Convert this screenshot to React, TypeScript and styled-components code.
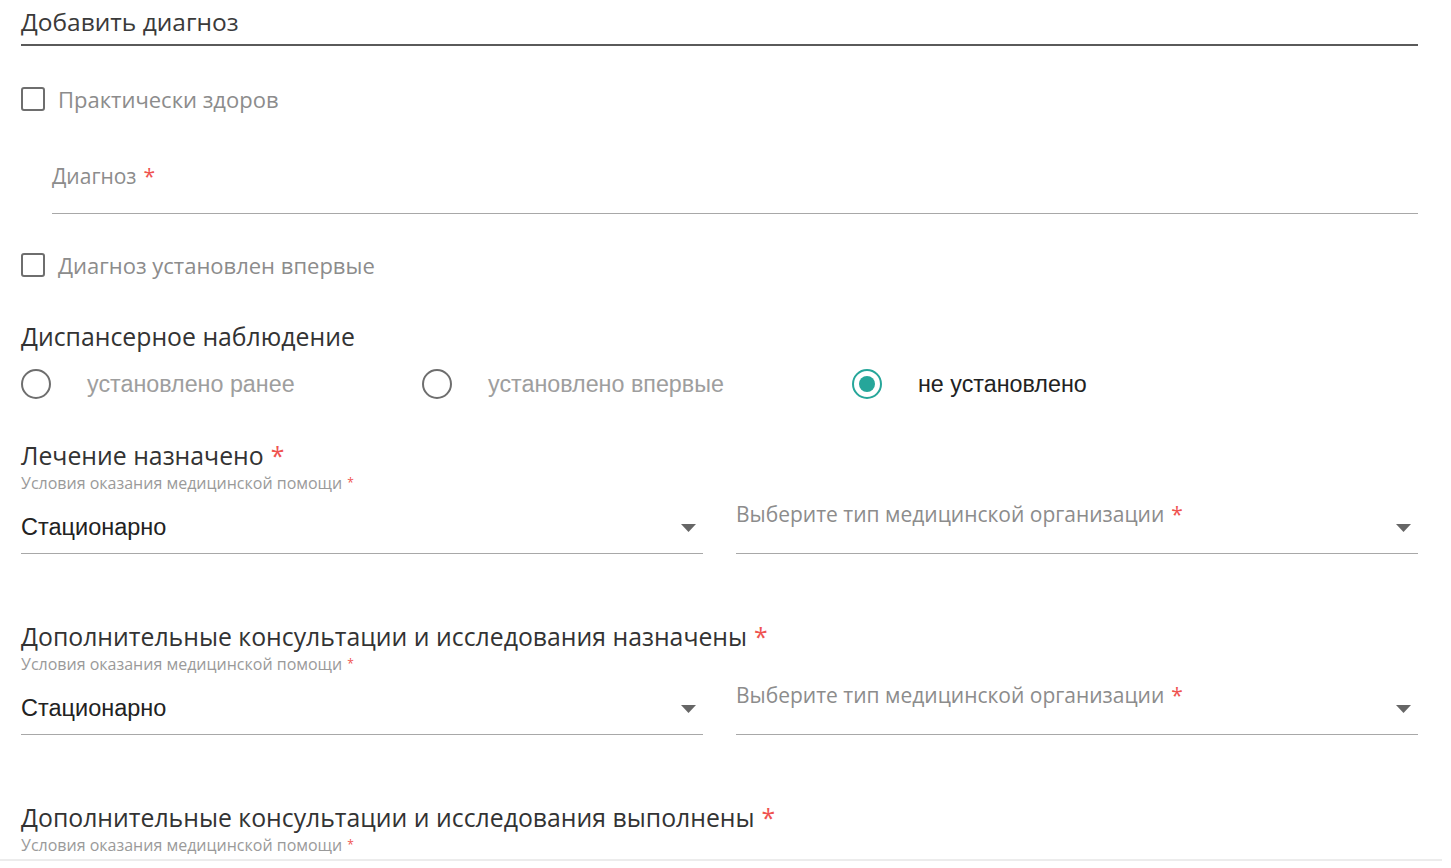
import React from "react";
import styled, { createGlobalStyle } from "styled-components";

const GlobalStyle = createGlobalStyle`
  html, body {
    margin: 0;
    padding: 0;
    background: #ffffff;
  }
  body {
    font-family: "Open Sans", "Noto Sans", sans-serif;
    color: #333;
  }
`;

const Page = styled.div`
  width: 1451px;
  height: 868px;
  overflow: hidden;
  box-sizing: border-box;
`;

const Form = styled.div`
  width: 1397px;
  margin-left: 21px;
  display: flex;
  flex-direction: column;
`;

const Title = styled.div`
  font-size: 24.5px;
  line-height: 44px;
  height: 44px;
  color: #3a3a3a;
  border-bottom: 2px solid #5a5a5a;
`;

const CheckRow = styled.label<{ $top: number }>`
  display: flex;
  align-items: center;
  height: 40px;
  margin-top: ${(p) => p.$top}px;
  gap: 13px;
  font-size: 22px;
  color: #8c8c8c;
`;

const Box = styled.span`
  width: 20px;
  height: 20px;
  border: 2px solid #6e6e6e;
  border-radius: 3px;
  flex-shrink: 0;
`;

const Star = styled.span<{ $small?: boolean }>`
  color: #ef5350;
  margin-left: ${(p) => (p.$small ? "5px" : "7px")};
  font-size: ${(p) => (p.$small ? "12px" : "inherit")};
  vertical-align: ${(p) => (p.$small ? "top" : "baseline")};
`;

const TextField = styled.div`
  margin-top: 40px;
  margin-left: 31px;
  height: 54px;
  border-bottom: 1px solid #a8a8a8;
`;

const FieldLabel = styled.div`
  font-size: 21px;
  line-height: 34px;
  color: #8c8c8c;
`;

const Heading = styled.div<{ $top: number }>`
  margin-top: ${(p) => p.$top}px;
  font-size: 24.8px;
  line-height: 34px;
  color: #333;
  white-space: nowrap;
`;

const SubLabel = styled.div`
  font-size: 16px;
  line-height: 22px;
  color: #9a9a9a;
  white-space: nowrap;
`;

const RadioRow = styled.div`
  display: flex;
  align-items: center;
  height: 40px;
  margin-top: 11px;
`;

const RadioItem = styled.label<{ $width: number }>`
  display: flex;
  align-items: center;
  gap: 36px;
  width: ${(p) => p.$width}px;
  font-family: "Liberation Sans", Arial, sans-serif;
  font-size: 23.3px;
`;

const Circle = styled.span<{ $on?: boolean }>`
  width: 26px;
  height: 26px;
  border-radius: 50%;
  border: 2.5px solid ${(p) => (p.$on ? "#26a69a" : "#6e6e6e")};
  display: flex;
  align-items: center;
  justify-content: center;
  flex-shrink: 0;
`;

const Dot = styled.span`
  width: 16px;
  height: 16px;
  border-radius: 50%;
  background: #26a69a;
`;

const RadioText = styled.span<{ $on?: boolean }>`
  color: ${(p) => (p.$on ? "#222" : "#9e9e9e")};
  white-space: nowrap;
`;

const SelectGrid = styled.div`
  display: grid;
  grid-template-columns: 1fr 1fr;
  column-gap: 33px;
`;

const Select = styled.div`
  border-bottom: 1px solid #a8a8a8;
  display: flex;
  align-items: flex-end;
  justify-content: space-between;
  padding-bottom: 8px;
  height: 51px;
`;

const Value = styled.span`
  font-family: "Liberation Sans", Arial, sans-serif;
  font-size: 23.5px;
  line-height: 35px;
  color: #222;
`;

const Placeholder = styled.span`
  font-size: 21px;
  line-height: 35px;
  color: #8c8c8c;
  margin-bottom: 13px;
  white-space: nowrap;
`;

const ArrowBox = styled.span`
  height: 35px;
  width: 30px;
  display: flex;
  align-items: center;
  justify-content: center;
`;

const Arrow = () => (
  <ArrowBox>
    <svg width="15" height="8" viewBox="0 0 15 8">
      <path d="M0 0 L15 0 L7.5 8 Z" fill="#666" />
    </svg>
  </ArrowBox>
);

const BottomRule = styled.div`
  margin-top: 3px;
  margin-left: -21px;
  width: 1442px;
  height: 2px;
  background: #ececec;
`;

const MedSelects = () => (
  <SelectGrid>
    <Select>
      <Value>Стационарно</Value>
      <Arrow />
    </Select>
    <Select>
      <Placeholder>
        Выберите тип медицинской организации<Star>*</Star>
      </Placeholder>
      <Arrow />
    </Select>
  </SelectGrid>
);

const Conditions = () => (
  <SubLabel>
    Условия оказания медицинской помощи<Star $small>*</Star>
  </SubLabel>
);

export default function App() {
  return (
    <Page>
      <GlobalStyle />
      <Form>
        <Title>Добавить диагноз</Title>

        <CheckRow $top={33}>
          <Box />
          Практически здоров
        </CheckRow>

        <TextField>
          <FieldLabel>
            Диагноз<Star>*</Star>
          </FieldLabel>
        </TextField>

        <CheckRow $top={31}>
          <Box />
          Диагноз установлен впервые
        </CheckRow>

        <Heading $top={34}>Диспансерное наблюдение</Heading>
        <RadioRow>
          <RadioItem $width={401}>
            <Circle />
            <RadioText>установлено ранее</RadioText>
          </RadioItem>
          <RadioItem $width={430}>
            <Circle />
            <RadioText>установлено впервые</RadioText>
          </RadioItem>
          <RadioItem $width={400}>
            <Circle $on>
              <Dot />
            </Circle>
            <RadioText $on>не установлено</RadioText>
          </RadioItem>
        </RadioRow>

        <Heading $top={34}>
          Лечение назначено<Star>*</Star>
        </Heading>
        <Conditions />
        <MedSelects />

        <Heading $top={65}>
          Дополнительные консультации и исследования назначены<Star>*</Star>
        </Heading>
        <Conditions />
        <MedSelects />

        <Heading $top={65}>
          Дополнительные консультации и исследования выполнены<Star>*</Star>
        </Heading>
        <Conditions />
        <BottomRule />
      </Form>
    </Page>
  );
}
